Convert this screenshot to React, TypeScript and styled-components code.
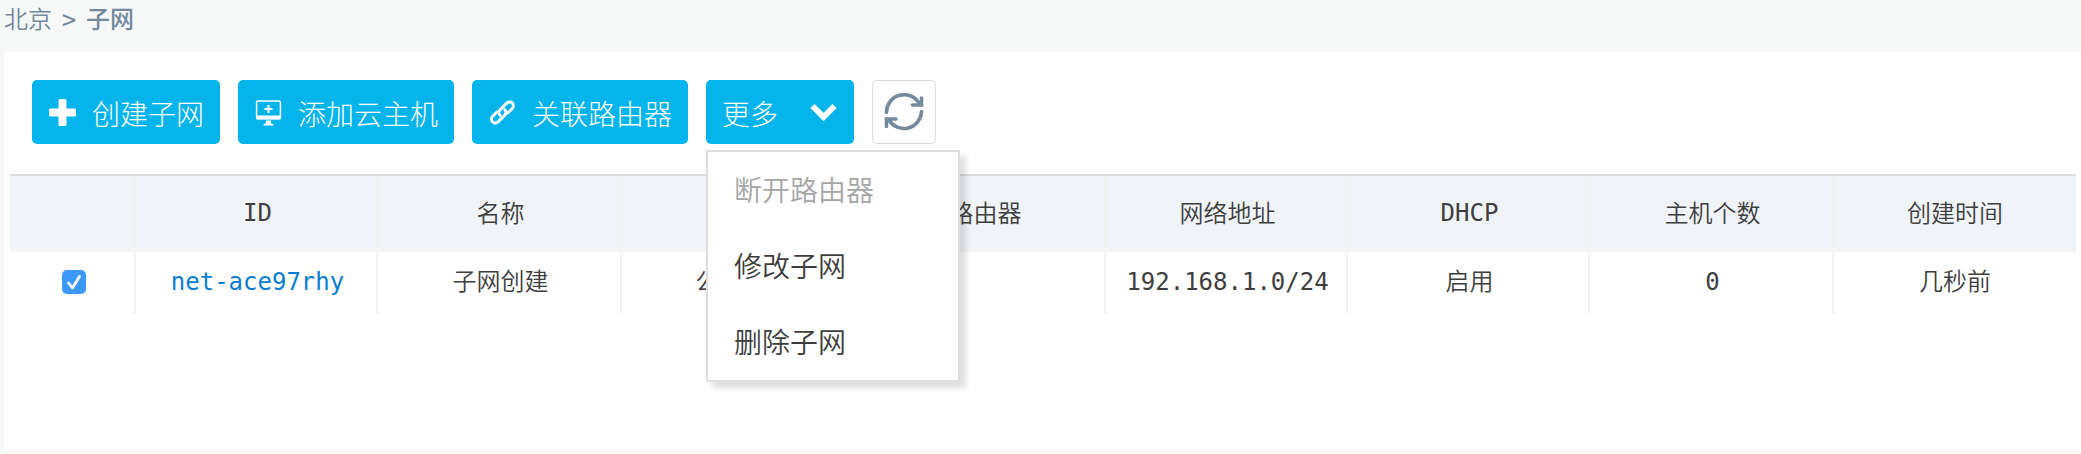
import React from 'react';
import styled, { createGlobalStyle } from 'styled-components';

const Global = createGlobalStyle`
  * { box-sizing: border-box; }
  body { margin: 0; background: #f6f8f8; color: #3e3e3e; font-family: "Noto Sans CJK SC", sans-serif; }
`;
const Page = styled.div`height: 454px; padding: 0 0 4px 4px; display: flex; flex-direction: column; overflow: hidden;`;
const Breadcrumb = styled.nav`
  height: 52px; display: flex; color: #72899e; font-size: 24px; line-height: 35px; font-weight: 350;
`;
const Separator = styled.span`width: 34px; text-align: center; font-family: "DejaVu Sans Mono", monospace; padding-top: 3px;`;
const Current = styled.span`font-weight: 500;`;
const Panel = styled.main`flex: 1; background: #fff; padding: 28px 5px 0 6px;`;
const Toolbar = styled.div`display: flex; gap: 18px; padding-left: 22px; height: 94px; align-items: flex-start;`;
const Button = styled.button<{ $width: number }>`
  width: ${p => p.$width}px; height: 64px; border: 0; border-radius: 5px; background: #06b4ec; color: #fff;
  display: flex; align-items: center; padding: 2px 17px 0 17px; font: 300 28px/40px "Noto Sans CJK SC", sans-serif; white-space: nowrap;
  svg { flex: none; margin-top: -2px; }
`;
const Label = styled.span`margin-left: 16px;`;
const MoreWrap = styled.div`position: relative;`;
const MoreButton = styled(Button)`justify-content: space-between; padding-left: 16px; padding-right: 17px;`;
const Refresh = styled.button`
  width: 64px; height: 64px; padding: 0; border: 1px solid #d9dce0; border-radius: 5px; background: #fff;
  display: flex; align-items: center; justify-content: center;
`;
const Menu = styled.ul`
  position: absolute; top: 70px; left: 0; z-index: 2; width: 254px; height: 232px; margin: 0; padding: 0; list-style: none;
  background: #fff; border: 2px solid #dedede; box-shadow: 6px 6px 6px rgba(0, 0, 0, 0.13);
`;
const MenuItem = styled.li<{ $disabled?: boolean }>`
  height: 76px; padding-left: 26px; font-size: 28px; line-height: 74px; font-weight: 350; color: ${p => (p.$disabled ? '#a6a6a6' : '#3e3e3e')};
`;
const Table = styled.div`border-top: 2px solid #dcddde;`;
const Row = styled.div<{ $head?: boolean }>`
  display: grid; grid-template-columns: 126px 242px 244px 242px 242px 242px 242px 244px 242px;
  height: ${p => (p.$head ? 76 : 62)}px;
  background: ${p => (p.$head ? '#f0f3f8' : '#fff')};
  border-bottom: ${p => (p.$head ? '4px solid #f2f4f6' : '0')};
`;
const Cell = styled.div<{ $mono?: boolean }>`
  border-right: 2px solid #f1f1f2; display: flex; align-items: center; justify-content: center; white-space: nowrap;
  padding-left: 3px;
  font-size: 24px; line-height: 35px; font-weight: ${p => (p.$mono ? 400 : 350)};
  font-family: ${p => (p.$mono ? '"DejaVu Sans Mono", monospace' : '"Noto Sans CJK SC", sans-serif')};
  &:last-child { border-right: 0; padding-left: 0; }
`;
const HeadCell = styled(Cell)`
  padding-bottom: ${p => (p.$mono ? 0 : 1)}px;
  padding-top: ${p => (p.$mono ? 3 : 0)}px;
`;
const DataCell = styled(Cell)`
  padding-bottom: ${p => (p.$mono ? 2 : 7)}px;
`;
const CheckCell = styled(Cell)`padding-left: 4px; padding-bottom: 2px;`;
const Link = styled.a`color: #0a7dd0;`;
const Checkbox = styled.span`
  width: 24px; height: 24px; border-radius: 5px; background: #3b99fc; display: flex;
`;

const PlusIcon = () => (
  <svg width="27" height="27" viewBox="0 0 27 27" fill="#fff">
    <path d="M11 0h5a1.500 1.500 0 0 1 1.500 1.500v8h8a1.500 1.500 0 0 1 1.500 1.500v5a1.500 1.500 0 0 1-1.500 1.500h-8v8a1.500 1.500 0 0 1-1.500 1.500h-5a1.500 1.500 0 0 1-1.500-1.500v-8h-8A1.500 1.500 0 0 1 0 16v-5a1.500 1.500 0 0 1 1.500-1.500h8v-8A1.500 1.500 0 0 1 11 0z" />
  </svg>
);
const HostIcon = () => (
  <svg width="27" height="27" viewBox="0 0 27 27" fill="none">
    <rect x="1.600" y="2" width="23.800" height="17.400" rx="1.500" stroke="#fff" strokeWidth="1.500" />
    <path d="M1 16.500h25V19a1.500 1.500 0 0 1-1.500 1.500h-22A1.500 1.500 0 0 1 1 19zM11 21.500h5v2.500l2.500 1.500v1h-10v-1L11 24z" fill="#fff" />
    <path d="M13.500 6v8M9.500 10h8" stroke="#fff" strokeWidth="2" />
  </svg>
);
const LinkIcon = () => (
  <svg width="27" height="27" viewBox="0 0 27 27" fill="none" stroke="#fff" strokeWidth="3" strokeLinecap="round">
    <path d="M11 16.200c-1.700-1.700-1.300-4 0-5.300l6.500-6.500c1.800-1.800 4.300-1.600 5.800-.3 1.500 1.500 1.300 4.200-.2 5.700l-4 4" />
    <path d="M15.800 10.800c1.700 1.700 1.300 4 0 5.300l-6.500 6.500c-1.800 1.800-4.300 1.600-5.800.3-1.500-1.500-1.300-4.200.2-5.700l4-4" />
  </svg>
);
const ChevronIcon = () => (
  <svg width="27" height="19" viewBox="0 0 27 19" fill="none" stroke="#fff" strokeWidth="6">
    <path d="M2.500 3l11 11 11-11" />
  </svg>
);
const RefreshIcon = () => (
  <svg width="40" height="40" viewBox="0 0 40 40" fill="none" stroke="#72899e" strokeWidth="3.600" strokeLinecap="round">
    <path d="M2.500 20.500A17.500 17.500 0 0 1 35.500 12M37.500 19.500A17.500 17.500 0 0 1 5 28" />
    <path d="M28.500 13h9V6M12 27H2.500v7.500" />
  </svg>
);
const CheckIcon = () => (
  <svg width="24" height="24" viewBox="0 0 24 24" fill="none" stroke="#fff" strokeWidth="2.800" strokeLinecap="round" strokeLinejoin="round">
    <path d="M6.500 13l4 5L17.500 6.500" />
  </svg>
);

export default function App() {
  return (
    <Page>
      <Global />
      <Breadcrumb><span>北京</span><Separator>&gt;</Separator><Current>子网</Current></Breadcrumb>
      <Panel>
        <Toolbar>
          <Button $width={188}><PlusIcon /><Label>创建子网</Label></Button>
          <Button $width={216}><HostIcon /><Label>添加云主机</Label></Button>
          <Button $width={216}><LinkIcon /><Label>关联路由器</Label></Button>
          <MoreWrap>
            <MoreButton $width={148}><span>更多</span><ChevronIcon /></MoreButton>
            <Menu>
              <MenuItem $disabled>断开路由器</MenuItem>
              <MenuItem>修改子网</MenuItem>
              <MenuItem>删除子网</MenuItem>
            </Menu>
          </MoreWrap>
          <Refresh><RefreshIcon /></Refresh>
        </Toolbar>
        <Table>
          <Row $head>
            <HeadCell />
            <HeadCell $mono>ID</HeadCell>
            <HeadCell>名称</HeadCell>
            <HeadCell />
            <HeadCell>路由器</HeadCell>
            <HeadCell>网络地址</HeadCell>
            <HeadCell $mono>DHCP</HeadCell>
            <HeadCell>主机个数</HeadCell>
            <HeadCell>创建时间</HeadCell>
          </Row>
          <Row>
            <CheckCell><Checkbox><CheckIcon /></Checkbox></CheckCell>
            <DataCell $mono><Link>net-ace97rhy</Link></DataCell>
            <DataCell>子网创建</DataCell>
            <DataCell>公有网络</DataCell>
            <DataCell />
            <DataCell $mono>192.168.1.0/24</DataCell>
            <DataCell>启用</DataCell>
            <DataCell $mono>0</DataCell>
            <DataCell>几秒前</DataCell>
          </Row>
        </Table>
      </Panel>
    </Page>
  );
}
